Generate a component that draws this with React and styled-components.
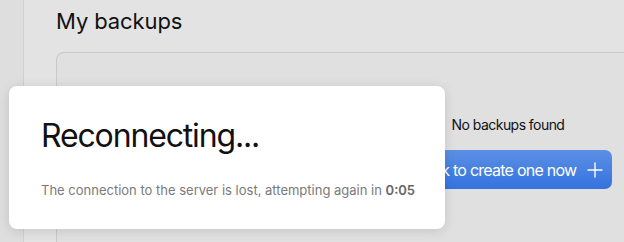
import styled, { createGlobalStyle } from "styled-components";
import { Plus } from "lucide-react";

const GlobalStyle = createGlobalStyle`
    html, body {
        margin: 0;
        padding: 0;
        height: 100%;
        overflow: hidden;
        background: #e3e3e3;
        font-family: Inter, "Noto Sans", sans-serif;
    }
`

const Page = styled.div`
    display: flex;
    height: 242px;
    position: relative;
    overflow: hidden;
`

const Sidebar = styled.div`
    width: 23px;
    flex-shrink: 0;
    background: #dedede;
    border-right: 1px solid #d0d0d0;
`

const Main = styled.main`
    flex: 1;
    min-width: 0;
    padding: 0 0 0 32px;
    display: flex;
    flex-direction: column;
`

const Heading = styled.h1`
    margin: 8px 0 0 0;
    font-size: 22px;
    font-weight: 400;
    line-height: 26px;
    letter-spacing: -0.1px;
    color: #111;
`

const Panel = styled.section`
    margin-top: 18px;
    width: 902px;
    flex: 1;
    border: 1px solid #c9c9c9;
    border-bottom: none;
    border-radius: 8px 8px 0 0;
    background: #e0e0e0;
    display: flex;
    flex-direction: column;
    align-items: center;
    padding-top: 63px;
`

const EmptyText = styled.p`
    margin: 0;
    font-size: 14px;
    letter-spacing: -0.55px;
    color: #111;
    line-height: 18px;
`

const CreateButton = styled.button`
    margin-top: 16px;
    height: 39px;
    display: flex;
    align-items: center;
    gap: 7px;
    padding: 0 5px 0 12px;
    border: none;
    border-radius: 7px;
    background: linear-gradient(#5b90e4, #3472df);
    color: #fff;
    font-family: inherit;
    font-size: 16px;
    letter-spacing: -0.75px;
    cursor: pointer;
`

const Dialog = styled.div`
    position: absolute;
    left: 9px;
    top: 86px;
    width: 436px;
    height: 143px;
    box-sizing: border-box;
    padding: 31px 20px 0 32px;
    background: #fff;
    border-radius: 8px;
    box-shadow: 0 2px 12px rgba(0, 0, 0, 0.12);
    display: flex;
    flex-direction: column;
`

const DialogTitle = styled.h2`
    margin: 0;
    font-size: 32px;
    font-weight: 400;
    line-height: 38px;
    color: #111;
    letter-spacing: -1.15px;
`

const DialogText = styled.p`
    margin: 26px 0 0 0;
    font-size: 13px;
    line-height: 18px;
    color: #7a7a7a;
    white-space: nowrap;

    b {
        font-weight: 600;
        color: #666;
    }
`

export default function App() {
    return (
        <>
            <GlobalStyle />
            <Page>
                <Sidebar />
                <Main>
                    <Heading>My backups</Heading>
                    <Panel>
                        <EmptyText>No backups found</EmptyText>
                        <CreateButton>
                            Click to create one now
                            <Plus size={24} strokeWidth={1.4} />
                        </CreateButton>
                    </Panel>
                </Main>
                <Dialog>
                    <DialogTitle>Reconnecting...</DialogTitle>
                    <DialogText>
                        The connection to the server is lost, attempting again in <b>0:05</b>
                    </DialogText>
                </Dialog>
            </Page>
        </>
    )
}
